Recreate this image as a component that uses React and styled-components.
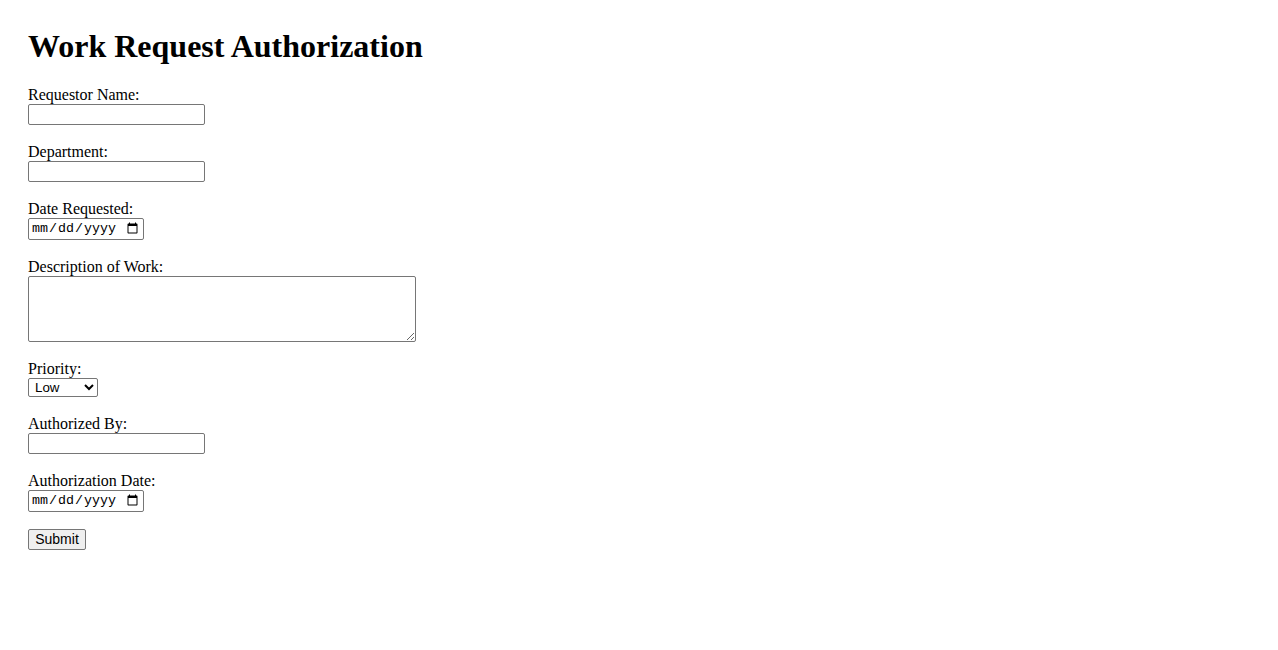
import React from "react";
import styled, { createGlobalStyle } from "styled-components";

const GlobalStyle = createGlobalStyle`
  html, body { margin: 0; padding: 0; background: #fff; }
  body { font-family: "Liberation Serif", "Times New Roman", serif; font-size: 16px; color: #000; }
`;

const Page = styled.div`
  padding: 28px;
`;

const Title = styled.h1`
  margin: 0 0 21px;
  font-size: 32px;
  font-weight: bold;
  line-height: 37px;
`;

const Form = styled.form`
  display: flex;
  flex-direction: column;
  align-items: flex-start;
`;

const Field = styled.div`
  display: flex;
  flex-direction: column;
  align-items: flex-start;
  margin-bottom: ${(p) => p.$gap || 18}px;
`;

const Label = styled.label`
  display: block;
  height: 18px;
  line-height: 18px;
`;

const TextInput = styled.input`
  box-sizing: border-box;
  width: 177px;
  height: 21px;
  margin: 0;
  padding: 1px 2px;
  border: 1px solid #767676;
  border-radius: 2px;
  font: 13.333px "Liberation Sans", Arial, sans-serif;
`;

const DateInput = styled.input`
  box-sizing: border-box;
  width: 116px;
  height: 22px;
  margin: 0;
  padding: 1px 2px;
  border: 1px solid #767676;
  border-radius: 2px;
  font: 13.333px "Liberation Mono", "DejaVu Sans Mono", monospace;
`;

const TextArea = styled.textarea`
  box-sizing: border-box;
  width: 388px;
  height: 66px;
  margin: 0;
  padding: 2px;
  border: 1px solid #767676;
  border-radius: 2px;
  font: 13.333px "Liberation Mono", monospace;
`;

const Select = styled.select`
  box-sizing: border-box;
  width: 70px;
  height: 19px;
  margin: 0;
  padding: 0 0 0 2px;
  border: 1px solid #767676;
  border-radius: 2px;
  background: #fff;
  font: 13.333px "Liberation Sans", Arial, sans-serif;
`;

const SubmitButton = styled.button`
  box-sizing: border-box;
  width: 58px;
  height: 21px;
  padding: 0 6px 1px;
  margin: 0;
  border: 1px solid #767676;
  border-radius: 2px;
  background: #efefef;
  font: 14px "Liberation Sans", Arial, sans-serif;
  color: #000;
`;

export default function App() {
  return (
    <>
      <GlobalStyle />
      <Page>
        <Title>Work Request Authorization</Title>
        <Form onSubmit={(e) => e.preventDefault()}>
          <Field>
            <Label htmlFor="rn">Requestor Name:</Label>
            <TextInput id="rn" type="text" />
          </Field>
          <Field>
            <Label htmlFor="dep">Department:</Label>
            <TextInput id="dep" type="text" />
          </Field>
          <Field>
            <Label htmlFor="dr">Date Requested:</Label>
            <DateInput id="dr" type="date" />
          </Field>
          <Field $gap={18}>
            <Label htmlFor="desc">Description of Work:</Label>
            <TextArea id="desc" />
          </Field>
          <Field $gap={18}>
            <Label htmlFor="pr">Priority:</Label>
            <Select id="pr" defaultValue="Low">
              <option>Low</option>
              <option>Medium</option>
              <option>High</option>
            </Select>
          </Field>
          <Field>
            <Label htmlFor="ab">Authorized By:</Label>
            <TextInput id="ab" type="text" />
          </Field>
          <Field $gap={17}>
            <Label htmlFor="ad">Authorization Date:</Label>
            <DateInput id="ad" type="date" />
          </Field>
          <SubmitButton type="submit">Submit</SubmitButton>
        </Form>
      </Page>
    </>
  );
}
